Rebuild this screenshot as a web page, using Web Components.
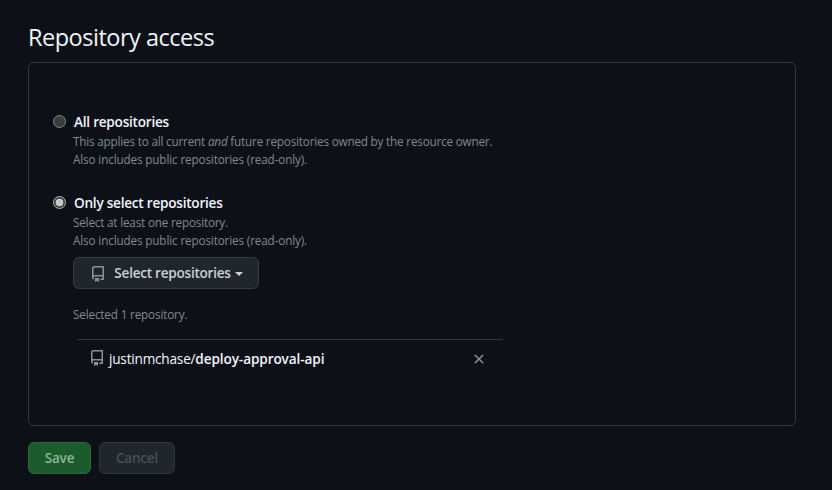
<!DOCTYPE html>
<html lang="en">
<head>
<meta charset="utf-8">
<title>Repository access</title>
<style>
body{margin:0;background:#0d1117;color:#f0f6fc;font:13.6px/21px "Open Sans","Noto Sans",sans-serif}
</style>
</head>
<body>
<access-page></access-page>
<script>
function define(name, html) {
  const t = document.createElement('template');
  t.innerHTML = html;
  customElements.define(name, class extends HTMLElement {
    constructor() {
      super();
      this.attachShadow({mode: 'open'}).append(t.content.cloneNode(true));
    }
  });
}

define('repo-icon', `<style>:host{display:block;width:16px;height:16px;color:#8b949e}svg{display:block}</style>
<svg width="16" height="16" viewBox="0 0 16 16" fill="currentColor"><path fill-rule="evenodd" d="M2 2.5A2.5 2.5 0 014.5 0h8.75a.75.75 0 01.75.75v12.5a.75.75 0 01-.75.75h-2.5a.75.75 0 110-1.5h1.75v-2h-8a1 1 0 00-.714 1.7.75.75 0 01-1.072 1.05A2.495 2.495 0 012 11.5v-9zm10.5-1V9h-8c-.356 0-.694.074-1 .208V2.5a1 1 0 011-1h8z"/><path d="M5 12h4v3.9L7 14.8 5 15.9z"/></svg>`);

define('close-icon', `<style>:host{display:block;width:16px;height:16px;color:#8b949e}svg{display:block}</style>
<svg width="16" height="16" viewBox="0 0 16 16" fill="currentColor"><path fill-rule="evenodd" d="M3.72 3.72a.75.75 0 011.06 0L8 6.94l3.22-3.22a.75.75 0 111.06 1.06L9.06 8l3.22 3.22a.75.75 0 11-1.06 1.06L8 9.06l-3.22 3.22a.75.75 0 01-1.06-1.06L6.94 8 3.72 4.78a.75.75 0 010-1.06z"/></svg>`);

define('radio-option', `<style>
:host{display:grid;grid-template-columns:13px 1fr;column-gap:7px}
.dot{box-sizing:border-box;width:13px;height:13px;margin-top:4px;border:1px solid #858585;border-radius:50%;background:#3b3b3b}
:host([checked]) .dot{border-color:#b5b5b5;background:radial-gradient(circle,#c6c6c6 0 3.6px,#3b3b3b 4.2px)}
.title{font-weight:600;margin-left:1px;white-space:nowrap;letter-spacing:-.24px}
.note{padding-bottom:1px;font-size:11.7px;line-height:18px;letter-spacing:-.18px;color:#8b949e;opacity:.92}
</style><div class="dot"></div><div><div class="title"><slot name="title"></slot></div><div class="note"><slot></slot></div></div>`);

define('ui-button', `<style>
:host{display:flex;align-items:center;justify-content:center;box-sizing:border-box;height:32px;border:1px solid #363b42;border-radius:6px;background:#21262d;color:#c9d1d9;font-weight:600;white-space:nowrap}
:host([variant=primary]){background:#1a5c2b;border-color:#2a6939;color:#93b39b}
:host([variant=disabled]){border-color:#30353c;color:#484f58}
</style><slot></slot>`);

define('repo-row', `<style>
:host{display:flex;align-items:center;box-sizing:border-box;width:426px;height:39px;border-top:1px solid #30363d;padding:0 16px 0 12px;color:#f0f6fc}
repo-icon{margin:-3px 4px 0 0}
close-icon{margin-left:auto}
.name{white-space:nowrap;margin-top:-1px}
</style><repo-icon></repo-icon><div class="name"><slot></slot></div><close-icon></close-icon>`);

define('access-panel', `<style>
:host{display:block;box-sizing:border-box;width:768px;height:364px;border:1px solid #30363d;border-radius:6px;padding:48px 24px 0}
</style><slot></slot>`);

define('access-page', `<style>
:host{display:block;box-sizing:border-box;width:832px;height:490px;padding:19px 36px 0 28px}
h2{margin:0 0 7px;font-size:23.5px;line-height:36px;font-weight:400;white-space:nowrap;letter-spacing:-.49px}
radio-option + radio-option{margin-top:23px}
.s{white-space:nowrap}
.b{letter-spacing:-.13px}
.f{letter-spacing:-.2px}
.g{font-weight:600;letter-spacing:-.1px}
.more{margin-left:20px}
.select{width:186px;margin-top:7px}
.select .s{letter-spacing:-.26px;margin-top:-1px}
.select repo-icon{margin:2px 8px 0 1px}
.caret{margin:1px 0 0 4px;border:4px solid transparent;border-top-color:currentColor;border-bottom:0}
.count{margin:16px 0 16px;font-size:11.7px;line-height:18px;letter-spacing:-.15px;color:#8b949e;opacity:.92}
repo-row{margin-left:4px}
.actions{display:flex;gap:8px;margin-top:16px}
.actions span{letter-spacing:-.25px;margin-top:-1px}
.save{width:63px}.cancel{width:76px}
</style>
<h2>Repository access</h2>
<access-panel>
  <radio-option><span slot="title">All repositories</span>
    <span class="s">This applies to all current <em>and</em> future repositories owned by the resource owner.</span><br><span class="s b">Also includes public repositories (read-only).</span></radio-option>
  <radio-option checked><span slot="title">Only select repositories</span>
    <span class="s">Select at least one repository.</span><br><span class="s b">Also includes public repositories (read-only).</span></radio-option>
  <div class="more">
    <ui-button class="select"><repo-icon></repo-icon><span class="s">Select repositories</span><i class="caret"></i></ui-button>
    <div class="count"><span class="s">Selected 1 repository.</span></div>
    <repo-row><span class="f">justinmchase/</span><b class="g">deploy-approval-api</b></repo-row>
  </div>
</access-panel>
<div class="actions"><ui-button class="save" variant="primary"><span>Save</span></ui-button><ui-button class="cancel" variant="disabled"><span>Cancel</span></ui-button></div>`);
</script>
</body>
</html>
